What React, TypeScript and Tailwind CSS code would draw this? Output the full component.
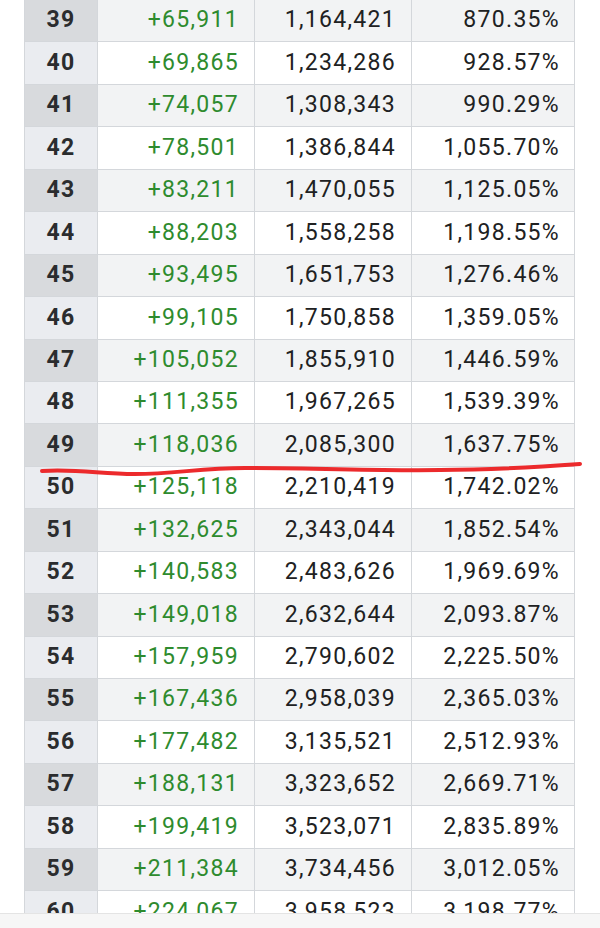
const rows: [number, string, string, string][] = [
  [39, "+65,911", "1,164,421", "870.35%"],
  [40, "+69,865", "1,234,286", "928.57%"],
  [41, "+74,057", "1,308,343", "990.29%"],
  [42, "+78,501", "1,386,844", "1,055.70%"],
  [43, "+83,211", "1,470,055", "1,125.05%"],
  [44, "+88,203", "1,558,258", "1,198.55%"],
  [45, "+93,495", "1,651,753", "1,276.46%"],
  [46, "+99,105", "1,750,858", "1,359.05%"],
  [47, "+105,052", "1,855,910", "1,446.59%"],
  [48, "+111,355", "1,967,265", "1,539.39%"],
  [49, "+118,036", "2,085,300", "1,637.75%"],
  [50, "+125,118", "2,210,419", "1,742.02%"],
  [51, "+132,625", "2,343,044", "1,852.54%"],
  [52, "+140,583", "2,483,626", "1,969.69%"],
  [53, "+149,018", "2,632,644", "2,093.87%"],
  [54, "+157,959", "2,790,602", "2,225.50%"],
  [55, "+167,436", "2,958,039", "2,365.03%"],
  [56, "+177,482", "3,135,521", "2,512.93%"],
  [57, "+188,131", "3,323,652", "2,669.71%"],
  [58, "+199,419", "3,523,071", "2,835.89%"],
  [59, "+211,384", "3,734,456", "3,012.05%"],
  [60, "+224,067", "3,958,523", "3,198.77%"],
]

function Row({ row }: { row: [number, string, string, string] }) {
  const [lvl, gain, total, pct] = row
  const odd = lvl % 2 === 1
  return (
    <div
      className={`grid grid-cols-[73px_157px_157px_163px] h-[42.45px] border-b border-[#d4d7db] ${
        odd ? "bg-[#f2f3f4]" : "bg-white"
      }`}
    >
      <div
        className={`flex items-center justify-center border-r border-[#d4d7db] font-bold text-[#2b2c2e] ${
          odd ? "bg-[#d8dadd]" : "bg-[#eaecf0]"
        }`}
      >
        {lvl}
      </div>
      <div className="flex items-center justify-end pr-[15px] border-r border-[#d4d7db] text-[#2e8b2e]">
        {gain}
      </div>
      <div className="flex items-center justify-end pr-[15px] border-r border-[#d4d7db] text-[#202122]">
        {total}
      </div>
      <div className="flex items-center justify-end pr-[15px] text-[#202122]">{pct}</div>
    </div>
  )
}

export default function App() {
  return (
    <div className="relative w-[600px] h-[928px] overflow-hidden bg-white font-['Roboto',sans-serif] text-[23px] tracking-[1.3px]">
      <div className="ml-[24px] mt-[-1px] w-[551px] border-x border-t border-[#d4d7db]">
        {rows.map((r) => (
          <Row key={r[0]} row={r} />
        ))}
      </div>

      {/* red marker stroke under level 49 */}
      <svg className="absolute left-0 top-0 pointer-events-none" width="600" height="928">
        <path
          d="M42 471 C 80 469, 100 474, 135 474 C 175 474, 200 468, 245 468 C 320 468, 380 471, 440 470 C 500 470, 540 467, 580 464"
          fill="none"
          stroke="#ec2a2c"
          strokeWidth="4"
          strokeLinecap="round"
        />
      </svg>

      <div className="absolute left-0 right-0 bottom-0 h-[15px] bg-[#f6f6f6] border-t border-[#e4e4e4]" />
    </div>
  )
}
